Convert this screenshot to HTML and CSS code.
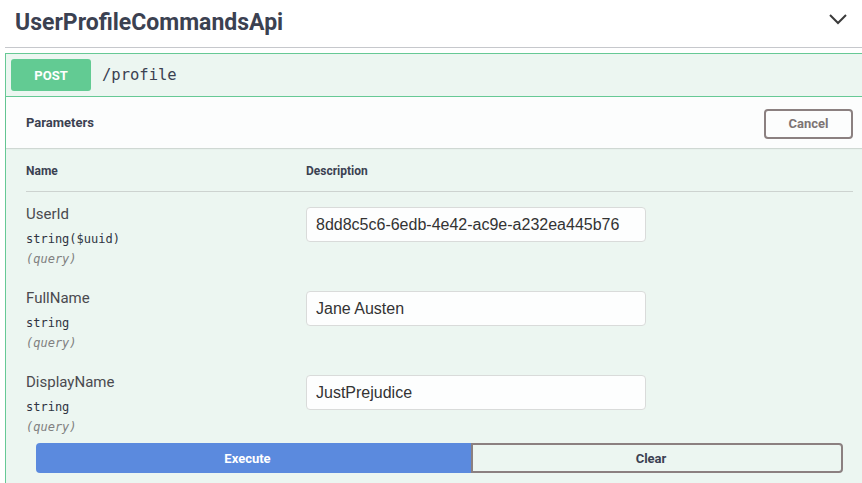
FILE: index.html
```html
<!DOCTYPE html>
<html>
<head>
<meta charset="utf-8">
<link rel="stylesheet" href="styles.css">
</head>
<body>
<div class="wrap">
  <div class="tag">
    <h3 class="tag-title">UserProfileCommandsApi</h3>
    <svg class="chev" width="20" height="12" viewBox="0 0 20 12"><path d="M2 2 L10 10 L18 2" fill="none" stroke="#3b3b3b" stroke-width="2"/></svg>
  </div>
  <div class="opblock">
    <div class="summary">
      <span class="method">POST</span>
      <span class="path">/profile</span>
    </div>
    <div class="section-header">
      <h4 class="sh-title">Parameters</h4>
      <button class="cancel">Cancel</button>
    </div>
    <div class="params">
      <div class="thead">
        <div class="col-name">Name</div>
        <div class="col-desc">Description</div>
      </div>
      <div class="row">
        <div class="col-name">
          <div class="pname">UserId</div>
          <div class="ptype">string($uuid)</div>
          <div class="pin">(query)</div>
        </div>
        <div class="col-desc"><input class="inp" type="text" value="8dd8c5c6-6edb-4e42-ac9e-a232ea445b76"></div>
      </div>
      <div class="row">
        <div class="col-name">
          <div class="pname">FullName</div>
          <div class="ptype">string</div>
          <div class="pin">(query)</div>
        </div>
        <div class="col-desc"><input class="inp" type="text" value="Jane Austen"></div>
      </div>
      <div class="row last">
        <div class="col-name">
          <div class="pname">DisplayName</div>
          <div class="ptype">string</div>
          <div class="pin">(query)</div>
        </div>
        <div class="col-desc"><input class="inp" type="text" value="JustPrejudice"></div>
      </div>
    </div>
    <div class="exec-wrap">
      <button class="execute">Execute</button>
      <button class="clear">Clear</button>
    </div>
  </div>
</div>
</body>
</html>
```
FILE: styles.css
```css
html, body {
  margin: 0;
  padding: 0;
  background: #ffffff;
  overflow: hidden;
}
.wrap {
  padding-left: 5px;
  width: 869px;
  font-family: Roboto, "Open Sans", sans-serif;
  color: #3b4151;
}
.tag {
  height: 47px;
  border-bottom: 1px solid #c6c8cc;
  display: flex;
  align-items: center;
  padding-left: 10px;
  width: 847px;
  box-sizing: content-box;
}
.tag-title {
  margin: 0;
  font-size: 23px;
  font-weight: 700;
  color: #3b4151;
  flex: 1;
  padding-bottom: 3px;
}
.chev {
  margin-right: 14px;
  margin-bottom: 10px;
}
.opblock {
  margin-top: 5px;
  width: 869px;
  box-sizing: border-box;
  border: 1px solid #66c995;
  background: #ecf6f1;
  height: 440px;
}
.summary {
  display: flex;
  align-items: center;
  padding: 5px;
  border-bottom: 1px solid #66c995;
}
.method {
  width: 80px;
  height: 32px;
  border-radius: 3px;
  background: #62cb93;
  color: #fff;
  font-weight: 700;
  font-size: 13px;
  display: flex;
  align-items: center;
  justify-content: center;
}
.path {
  margin-left: 11px;
  font-family: "DejaVu Sans Mono", monospace;
  font-size: 15.5px;
  color: #3b4151;
}
.section-header {
  display: flex;
  align-items: center;
  justify-content: space-between;
  padding: 0 20px;
  height: 51px;
  background: #fcfdfd;
  box-shadow: 0 1px 1px rgba(0,0,0,0.12);
}
.sh-title {
  margin: 0;
  font-size: 13px;
  font-weight: 700;
}
.cancel {
  width: 89px;
  height: 30px;
  margin-top: 2px;
  border: 2px solid #8b8080;
  border-radius: 4px;
  background: transparent;
  color: #7d7474;
  font-family: Roboto, sans-serif;
  font-weight: 700;
  font-size: 13px;
}
.params {
  padding: 0 20px;
}
.thead {
  display: flex;
  padding: 13px 0 11px;
  border-bottom: 1px solid #cdd3d0;
  font-size: 12px;
  font-weight: 700;
  line-height: 18px;
  margin-top: 1px;
}
.col-name {
  width: 280px;
}
.row {
  display: flex;
  padding: 12px 0 9px;
}
.row.last {
  padding-bottom: 0;
}
.pname {
  font-size: 15px;
  line-height: 20px;
  color: #4a4a4f;
}
.ptype {
  margin-top: 7px;
  font-family: "DejaVu Sans Mono", monospace;
  font-size: 12px;
  font-weight: 400;
  line-height: 16px;
  color: #2f3442;
}
.pin {
  margin-top: 4px;
  font-family: "DejaVu Sans Mono", monospace;
  font-size: 12px;
  font-style: italic;
  line-height: 16px;
  color: #808080;
}
.inp {
  margin-top: 3px;
  width: 340px;
  height: 35px;
  box-sizing: border-box;
  border: 1px solid #d9dbda;
  border-radius: 4px;
  background: #fdfefe;
  padding: 0 9px;
  font-family: "Liberation Sans", Arial, sans-serif;
  font-size: 16px;
  color: #333;
  outline: none;
}
.exec-wrap {
  display: flex;
  padding: 8px 30px 0;
}
.execute {
  width: 435px;
  height: 30px;
  border: none;
  border-radius: 4px 0 0 4px;
  background: #5b8ade;
  color: #fff;
  font-family: Roboto, sans-serif;
  font-weight: 700;
  font-size: 13px;
  padding: 0 12px 0 0;
}
.clear {
  flex: 1;
  height: 30px;
  border: 2px solid #8b8080;
  border-radius: 0 4px 4px 0;
  background: transparent;
  color: #3b4151;
  font-family: Roboto, sans-serif;
  font-weight: 700;
  font-size: 13px;
  padding: 0 12px 0 0;
}
```
